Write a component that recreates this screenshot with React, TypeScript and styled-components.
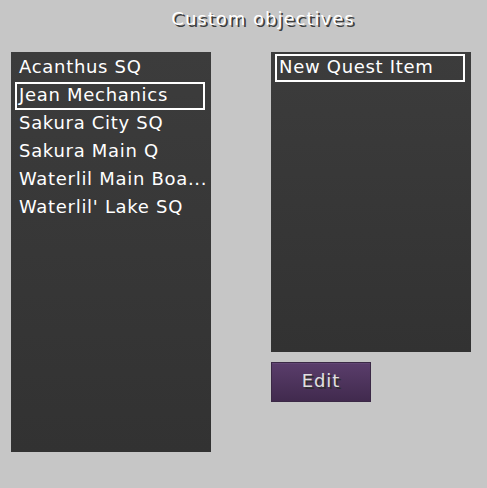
import React from "react";
import styled, { createGlobalStyle } from "styled-components";

const Global = createGlobalStyle`
  html, body { margin: 0; padding: 0; background: #c6c6c6; }
  body { width: 487px; height: 488px; overflow: hidden; }
`;

const Screen = styled.div`
  width: 487px;
  height: 488px;
  background: #c6c6c6;
  font-family: "DejaVu Sans", "Liberation Sans", sans-serif;
  display: flex;
  flex-direction: column;
`;

const Title = styled.div`
  height: 52px;
  box-sizing: border-box;
  padding: 7px 0 0 39px;
  text-align: center;
  color: #ffffff;
  font-size: 18px;
  line-height: 24px;
  text-shadow: 2px 2px 0 #3e3e3e;
  letter-spacing: 1px;
`;

const Main = styled.div`
  display: flex;
  padding-left: 11px;
  gap: 60px;
`;

const Panel = styled.div<{ $h: number }>`
  width: 200px;
  height: ${(p) => p.$h}px;
  box-sizing: border-box;
  padding: 2px 6px 2px 4px;
  background: linear-gradient(#3c3c3c, #323232);
  display: flex;
  flex-direction: column;
`;

const Row = styled.div<{ $selected?: boolean }>`
  height: 28px;
  box-sizing: border-box;
  padding-left: ${(p) => (p.$selected ? 2 : 4)}px;
  padding-bottom: 4px;
  border: ${(p) => (p.$selected ? "2px solid #ffffff" : "none")};
  display: flex;
  align-items: center;
  color: #ffffff;
  font-size: 18px;
  letter-spacing: 0.7px;
  white-space: nowrap;
`;

const RightColumn = styled.div`
  display: flex;
  flex-direction: column;
  gap: 10px;
`;

const Button = styled.div`
  width: 100px;
  height: 40px;
  box-sizing: border-box;
  border: 1px solid #3b2946;
  box-shadow: inset 0 1px 0 #634675;
  background: linear-gradient(#5a3d6b, #412a4e);
  display: flex;
  align-items: center;
  justify-content: center;
  color: #e0e0e0;
  font-size: 18px;
  letter-spacing: 0.9px;
  text-shadow: 2px 2px 0 #2e2e2e;
  padding-bottom: 4px;
`;

const objectives = [
  "Acanthus SQ",
  "Jean Mechanics",
  "Sakura City SQ",
  "Sakura Main Q",
  "Waterlil Main Boa...",
  "Waterlil' Lake SQ",
];

export default function App() {
  return (
    <Screen>
      <Global />
      <Title>Custom objectives</Title>
      <Main>
        <Panel $h={400}>
          {objectives.map((o, i) => (
            <Row key={o} $selected={i === 1}>
              {o}
            </Row>
          ))}
        </Panel>
        <RightColumn>
          <Panel $h={300}>
            <Row $selected>New Quest Item</Row>
          </Panel>
          <Button>Edit</Button>
        </RightColumn>
      </Main>
    </Screen>
  );
}
